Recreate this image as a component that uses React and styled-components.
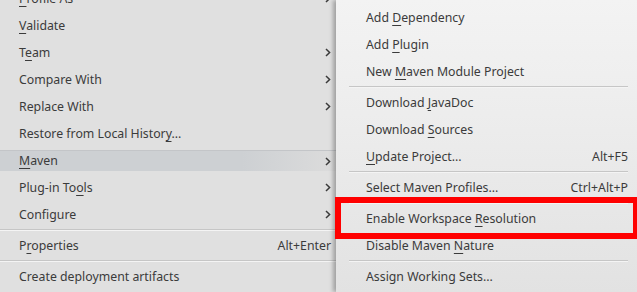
import React from "react";
import styled, { createGlobalStyle, css } from "styled-components";

const Global = createGlobalStyle`
  html, body { margin: 0; padding: 0; }
  body {
    width: 637px;
    height: 292px;
    overflow: hidden;
    background: #e0e0e0;
    font-family: "Noto Sans", "Open Sans", sans-serif;
    font-size: 12.3px;
    color: #3b3b3b;
  }
`;

const Screen = styled.div`
  display: flex;
  width: 637px;
  height: 292px;
  overflow: hidden;
`;

const LeftMenu = styled.div`
  width: 336px;
  flex: none;
  background: #e0e0e0;
  margin-top: -15px;
  display: flex;
  flex-direction: column;
`;

const RightMenu = styled.div`
  position: relative;
  z-index: 1;
  flex: 1;
  padding-top: 4px;
  background: linear-gradient(to bottom, #f3f3f3 0%, #ececec 45%, #e2e2e2 100%);
  box-shadow: -3px 0 4px rgba(0, 0, 0, 0.28);
  display: flex;
  flex-direction: column;
`;

const Item = styled.div`
  position: relative;
  display: flex;
  align-items: center;
  justify-content: space-between;
  height: 27px;
  line-height: 27px;
  padding: 0 ${(p) => p.$right}px 0 ${(p) => p.$left}px;
  white-space: nowrap;
  ${(p) =>
    p.$active &&
    css`
      height: 20px;
      line-height: 20px;
      margin: 3px 0 3px;
      border-top: 1px solid #c3c5c8;
      background: linear-gradient(to right, #cdd0d3 0%, #cdd0d3 72%, #dcdcdc 100%);
    `}
  ${(p) =>
    p.$marked &&
    css`
      &::after {
        content: "";
        position: absolute;
        top: -8px;
        bottom: -7px;
        left: -1px;
        right: -2px;
        border: 6px solid #ff0000;
        pointer-events: none;
      }
    `}
`;

const Label = styled.span``;

const Mn = styled.span`
  text-decoration: underline;
  text-decoration-thickness: 1px;
  text-underline-offset: 3px;
`;

const Shortcut = styled.span`
  color: #3b3b3b;
`;

const Separator = styled.div`
  height: 4px;
  display: flex;
  align-items: center;
  padding: 0 ${(p) => p.$right || 0}px 0 ${(p) => p.$left || 0}px;
  &::before {
    content: "";
    flex: 1;
    height: 0;
    border-top: 1px solid #c6c6c6;
    border-bottom: 1px solid #f4f4f4;
  }
`;

const Chevron = () => (
  <svg width="6" height="9" viewBox="0 0 6 9" style={{ display: "block" }}>
    <path d="M1 1 L4.6 4.5 L1 8" fill="none" stroke="#3b3b3b" strokeWidth="1.5" />
  </svg>
);

const label = (text, idx) => {
  if (idx == null) return text;
  return (
    <>
      {text.slice(0, idx)}
      <Mn>{text[idx]}</Mn>
      {text.slice(idx + 1)}
    </>
  );
};

const left = [
  { t: "Profile As", m: 0, sub: true },
  { t: "Validate", m: 0 },
  { t: "Team", m: 1, sub: true },
  { t: "Compare With", sub: true },
  { t: "Replace With", sub: true },
  { t: "Restore from Local History...", m: 25 },
  { t: "Maven", m: 0, sub: true, active: true },
  { t: "Plug-in Tools", m: 10, sub: true },
  { t: "Configure", sub: true },
  { sep: true },
  { t: "Properties", m: 1, sc: "Alt+Enter" },
  { sep: true },
  { t: "Create deployment artifacts" },
];

const right = [
  { t: "Add Dependency", m: 4 },
  { t: "Add Plugin", m: 4 },
  { t: "New Maven Module Project", m: 4 },
  { sep: true },
  { t: "Download JavaDoc", m: 9 },
  { t: "Download Sources", m: 9 },
  { t: "Update Project...", m: 0, sc: "Alt+F5" },
  { sep: true },
  { t: "Select Maven Profiles...", sc: "Ctrl+Alt+P" },
  { sep: true },
  { t: "Enable Workspace Resolution", m: 17, marked: true },
  { t: "Disable Maven Nature", m: 14 },
  { sep: true },
  { t: "Assign Working Sets..." },
];

export default function App() {
  return (
    <>
      <Global />
      <Screen>
        <LeftMenu>
          {left.map((it, i) =>
            it.sep ? (
              <Separator key={i} />
            ) : (
              <Item key={i} $left={19} $right={5} $active={it.active}>
                <Label>{label(it.t, it.m)}</Label>
                {it.sub && <Chevron />}
                {it.sc && <Shortcut>{it.sc}</Shortcut>}
              </Item>
            )
          )}
        </LeftMenu>
        <RightMenu>
          {right.map((it, i) =>
            it.sep ? (
              <Separator key={i} $left={13} $right={9} />
            ) : (
              <Item key={i} $left={30} $right={9} $marked={it.marked}>
                <Label>{label(it.t, it.m)}</Label>
                {it.sc && <Shortcut>{it.sc}</Shortcut>}
              </Item>
            )
          )}
        </RightMenu>
      </Screen>
    </>
  );
}
